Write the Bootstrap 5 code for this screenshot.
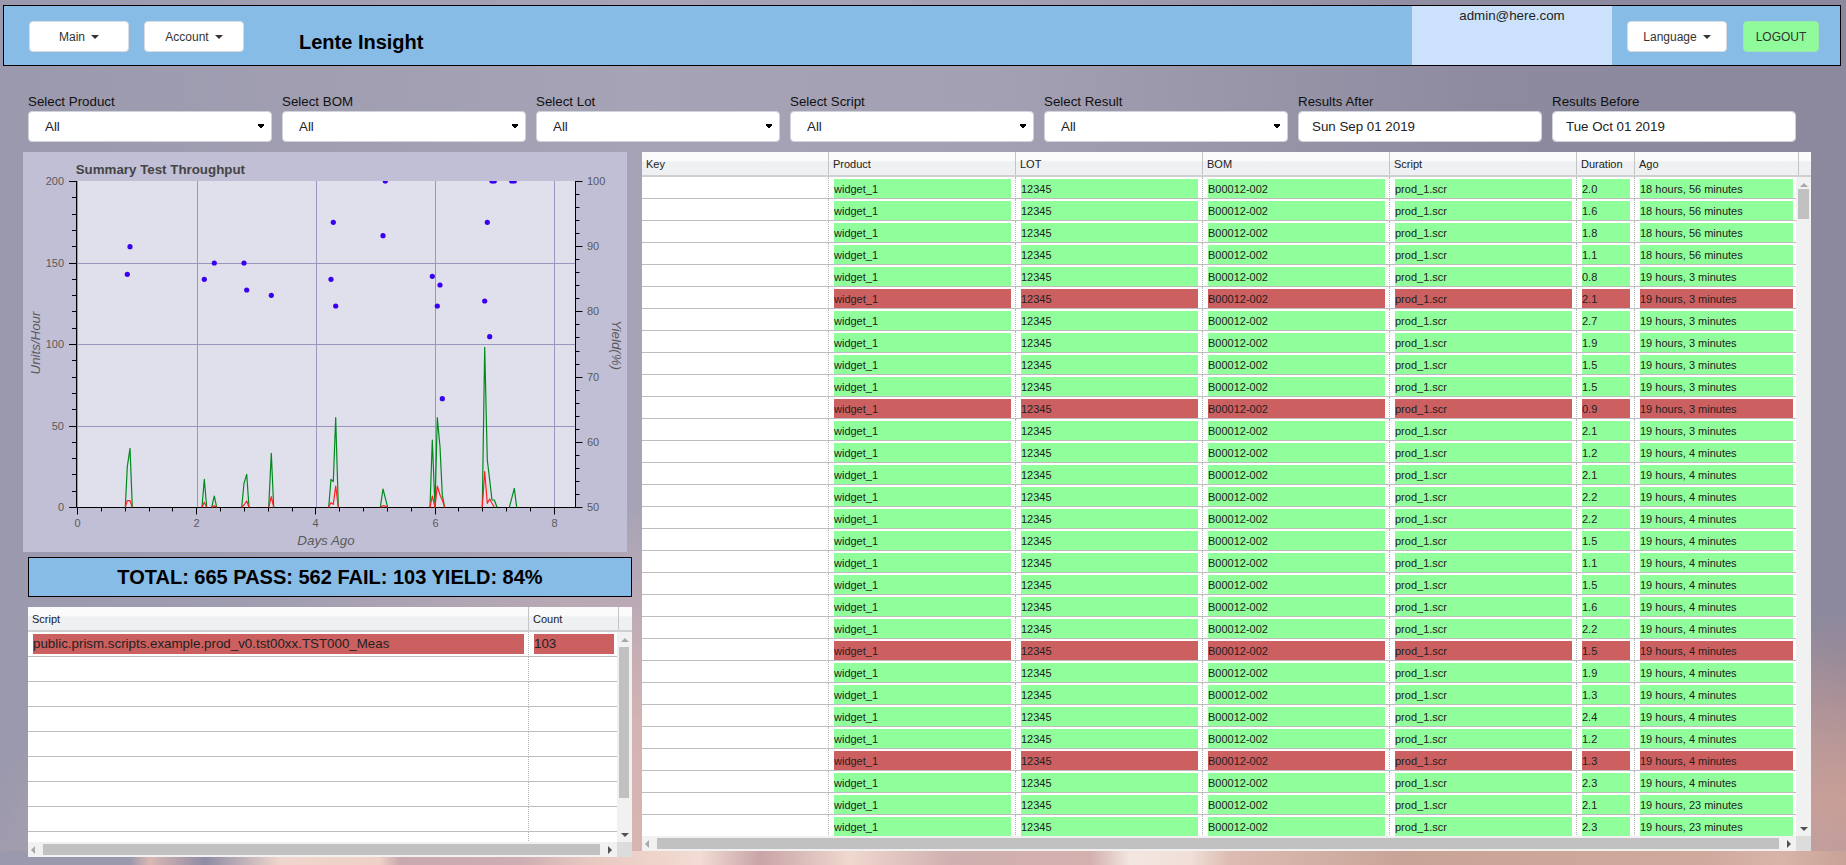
<!DOCTYPE html>
<html lang="en">
<head>
    <meta charset="UTF-8">
    <title>Lente Insight</title>
    <link href="https://cdn.jsdelivr.net/npm/bootstrap@5.3.3/dist/css/bootstrap.min.css" rel="stylesheet">
    <style>
        html, body { height: 100%; }
        body {
            margin: 0;
            overflow: hidden;
            font-family: "Liberation Sans", Arial, sans-serif;
            color: #222;
            background-color: #9b99ad;
            background-image:
                linear-gradient(90deg, #9b99ad 0, #9b99ad 130px, #d8b8b2 150px, #8f8ba5 205px, #efd6cc 280px, #eed0c6 380px, #c8a9ae 400px, #cdaeb2 520px, #e8c9c0 590px, #f2dcd3 700px, #c9a4a8 760px, #efd8ce 850px, #d0b0b0 950px, #d2b0ae 1090px, #f3e6e1 1130px, #f1dfd8 1190px, #dcbcb2 1230px, #c8a497 1400px, #cfa99c 1700px, #d8b4a8 1780px, #c8a296 1846px),
                radial-gradient(ellipse 1050px 420px at 1000px 900px, rgba(228,186,176,.95) 0, rgba(226,184,178,.75) 55%, rgba(200,165,175,0) 100%),
                radial-gradient(ellipse 260px 190px at 1846px 800px, rgba(196,150,138,.9) 0, rgba(178,140,140,.5) 60%, rgba(160,135,150,0) 100%),
                linear-gradient(90deg, #9b99ad 0, #a6a3b6 640px, #a3a0b3 1000px, #8d8a9f 1500px, #8c899e 1846px);
            background-size: 100% 14px, 100% 100%, 100% 100%, 100% 100%;
            background-position: 0 100%, 0 0, 0 0, 0 0;
            background-repeat: no-repeat;
        }

        .top-bar {
            height: 61px;
            margin: 5px 5px 0 3px;
            padding-left: 25px;
            padding-right: 21px;
            background: #87bce6;
            border: 1px solid #000;
        }
        .top-btn {
            height: 31px;
            margin-top: 15px;
            padding: 0;
            font-size: 12px;
            color: #333;
            background: #fff;
            border: 1px solid #d8dde3;
            border-radius: 4px;
        }
        .top-btn.dropdown-toggle::after {
            margin-left: 6px;
            vertical-align: 2px;
            border-top: 4px solid #333;
            border-right: 4px solid transparent;
            border-left: 4px solid transparent;
            border-bottom: 0;
        }
        .top-btn.wide-btn { width: 100px; }
        .top-btn.logout-btn { width: 76px; margin-left: 16px; background: #8ffb9b; border-color: #9be8ad; }
        .top-btn + .top-btn { margin-left: 15px; }
        .top-btn.wide-btn + .logout-btn { margin-left: 16px; }
        .app-title {
            margin: 24px 0 0 55px;
            font-size: 20px;
            line-height: 24px;
            font-weight: 700;
            color: #000;
        }
        .user-box {
            width: 200px;
            margin-right: 15px;
            padding-top: 1px;
            font-size: 13.33px;
            line-height: 18px;
            text-align: center;
            background: #cce2fc;
        }

        .filter-row { margin: 28px 0 0 28px; gap: 10px; }
        .filter-item { width: 244px; }
        .filter-item label {
            display: block;
            margin-bottom: 1px;
            font-size: 13.33px;
            line-height: 16px;
            color: #111;
        }
        .filter-item .form-select,
        .filter-item .form-control {
            height: 31px;
            min-height: 31px;
            font-size: 13.33px;
            line-height: 18px;
            color: #222;
            border: 1px solid #cfd3da;
            border-radius: 4px;
        }
        .filter-item .form-select {
            padding: 0 20px 0 16px;
            background-image: linear-gradient(45deg, transparent 50%, #000 50%), linear-gradient(-45deg, transparent 50%, #000 50%);
            background-size: 3px 6px, 3px 6px;
            background-position: right 10px center, right 7px center;
            background-repeat: no-repeat;
        }
        .filter-item .form-control { padding: 0 13px; }

        .main-row { margin: 10px 0 0 23px; }
        .left-col { width: 609px; }
        .right-col { width: 1169px; margin-left: 10px; }
        .chart-panel { width: 604px; height: 400px; background: #c1bfd6; }
        .chart-panel svg { display: block; font-family: "Liberation Sans", Arial, sans-serif; }
        .totals-box {
            width: 604px;
            height: 40px;
            margin: 5px 0 0 5px;
            font-size: 20px;
            font-weight: 700;
            line-height: 38px;
            text-align: center;
            color: #000;
            background: #87bce6;
            border: 1px solid #000;
        }

        .data-grid { background: #f1f1f1; font-size: 11px; color: #222; }
        .data-grid table { table-layout: fixed; border-collapse: separate; border-spacing: 0; }
        .grid-head { background: linear-gradient(#fbfbfb 0, #fbfbfb 40%, #eef0f1 42%, #eef0f1 100%); border-bottom: 2px solid #cfcfcf; }
        .grid-head th { padding: 2px 0 0 4px; font-weight: 400; color: #222; border-left: 1px solid #c4c4c4; }
        .grid-head th:first-child { border-left: 0; }
        .grid-rows { overflow: hidden; background: #fff; }
        .grid-rows td { padding: 0; border-left: 1px dotted #b5b5b5; border-bottom: 1px solid #bdbdbd; vertical-align: top; }
        .grid-rows td:first-child { border-left: 0; }
        .grid-rows tr:nth-child(even) td { background: #fafafa; }
        .cell-ok, .cell-bad { margin: 2px 4px 0 5px; padding-left: 0; white-space: nowrap; overflow: hidden; }
        .grid-rows td:last-child .cell-ok, .grid-rows td:last-child .cell-bad { margin-right: 3px; }
        .cell-ok { background: #90fe9b; }
        .cell-bad { background: #cc5f5f; }

        #product-grid { height: 699px; }
        #product-grid .grid-head { height: 25px; }
        #product-grid .grid-head th { height: 23px; }
        #product-grid .grid-body { height: 659px; }
        #product-grid .grid-rows { width: 1154px; }
        #product-grid .grid-rows td { height: 22px; }
        #product-grid .cell-ok, #product-grid .cell-bad { height: 19px; line-height: 20px; }
        #product-grid .v-bar { width: 15px; }
        #product-grid .v-thumb { height: 30px; margin: 2px 2px 0; }
        #product-grid .h-thumb { width: 1122px; }

        #script-grid { height: 250px; margin: 10px 0 0 5px; width: 604px; }
        #script-grid .grid-head { height: 25px; }
        #script-grid .grid-head th { height: 23px; }
        #script-grid .grid-body { height: 210px; }
        #script-grid .grid-rows { width: 589px; }
        #script-grid .grid-rows td { height: 25px; font-size: 13.33px; }
        #script-grid .cell-bad { height: 20px; line-height: 20px; }
        #script-grid .v-bar { width: 15px; }
        #script-grid .v-thumb { height: 151px; margin: 5px 3px 0 2px; }
        #script-grid .h-thumb { width: 557px; }

        .v-bar { background: #f1f1f1; }
        .v-thumb { background: #c1c1c1; }
        .arrow-up, .arrow-down { width: 0; height: 0; margin: 0 auto; border-left: 4px solid transparent; border-right: 4px solid transparent; }
        .arrow-up { margin-top: 6px; border-bottom: 4px solid #a9a9a9; }
        .arrow-down { margin-bottom: 5px; border-top: 4px solid #505050; }
        .h-bar { height: 15px; background: #f1f1f1; }
        .h-thumb { height: 11px; margin-left: 8px; background: #c1c1c1; }
        .arrow-left, .arrow-right { width: 0; height: 0; border-top: 4px solid transparent; border-bottom: 4px solid transparent; }
        .arrow-left { margin-left: 3px; border-right: 4px solid #a9a9a9; }
        .arrow-right { margin-left: 8px; border-left: 4px solid #505050; }
        .bar-corner { width: 15px; background: #dcdcdc; }
    </style>
</head>
<body>
    <div class="top-bar d-flex align-items-start">
        <button type="button" class="btn top-btn wide-btn dropdown-toggle">Main</button>
        <button type="button" class="btn top-btn wide-btn dropdown-toggle">Account</button>
        <div class="app-title">Lente Insight</div>
        <div class="user-box ms-auto align-self-stretch">admin@here.com</div>
        <button type="button" class="btn top-btn wide-btn dropdown-toggle">Language</button>
        <button type="button" class="btn top-btn logout-btn">LOGOUT</button>
    </div>

    <div class="filter-row d-flex">
        <div class="filter-item"><label>Select Product</label><select class="form-select"><option>All</option></select></div>
        <div class="filter-item"><label>Select BOM</label><select class="form-select"><option>All</option></select></div>
        <div class="filter-item"><label>Select Lot</label><select class="form-select"><option>All</option></select></div>
        <div class="filter-item"><label>Select Script</label><select class="form-select"><option>All</option></select></div>
        <div class="filter-item"><label>Select Result</label><select class="form-select"><option>All</option></select></div>
        <div class="filter-item"><label>Results After</label><input class="form-control" value="Sun Sep 01 2019"></div>
        <div class="filter-item"><label>Results Before</label><input class="form-control" value="Tue Oct 01 2019"></div>
    </div>

    <div class="main-row d-flex align-items-start">
        <div class="left-col">
            <div class="chart-panel">
                <svg id="chart" width="604" height="400" viewBox="23 152 604 400"></svg>
            </div>
            <div class="totals-box">TOTAL: 665 PASS: 562 FAIL: 103 YIELD: 84%</div>
            <div class="data-grid" id="script-grid">
                <div class="grid-head">
                    <table><colgroup><col style="width:500px"><col style="width:90px"><col style="width:14px"></colgroup>
                        <tr><th>Script</th><th>Count</th><th></th></tr></table>
                </div>
                <div class="grid-body d-flex">
                    <div class="grid-rows"><table id="script-rows"><colgroup><col style="width:500px"><col style="width:89px"></colgroup></table></div>
                    <div class="v-bar d-flex flex-column">
                        <div class="arrow-up"></div>
                        <div class="v-thumb"></div>
                        <div class="arrow-down mt-auto"></div>
                    </div>
                </div>
                <div class="d-flex">
                    <div class="h-bar d-flex align-items-center flex-grow-1">
                        <div class="arrow-left"></div>
                        <div class="h-thumb"></div>
                        <div class="arrow-right"></div>
                    </div>
                    <div class="bar-corner"></div>
                </div>
            </div>
        </div>

        <div class="right-col">
            <div class="data-grid" id="product-grid">
                <div class="grid-head">
                    <table><colgroup><col style="width:186px"><col style="width:187px"><col style="width:187px"><col style="width:187px"><col style="width:187px"><col style="width:58px"><col style="width:164px"><col style="width:13px"></colgroup>
                        <tr><th>Key</th><th>Product</th><th>LOT</th><th>BOM</th><th>Script</th><th>Duration</th><th>Ago</th><th></th></tr></table>
                </div>
                <div class="grid-body d-flex">
                    <div class="grid-rows"><table id="product-rows"><colgroup><col style="width:186px"><col style="width:187px"><col style="width:187px"><col style="width:187px"><col style="width:187px"><col style="width:58px"><col style="width:162px"></colgroup></table></div>
                    <div class="v-bar d-flex flex-column">
                        <div class="arrow-up"></div>
                        <div class="v-thumb"></div>
                        <div class="arrow-down mt-auto"></div>
                    </div>
                </div>
                <div class="d-flex">
                    <div class="h-bar d-flex align-items-center flex-grow-1">
                        <div class="arrow-left"></div>
                        <div class="h-thumb"></div>
                        <div class="arrow-right"></div>
                    </div>
                    <div class="bar-corner"></div>
                </div>
            </div>
        </div>
    </div>

    <script src="https://cdn.jsdelivr.net/npm/bootstrap@5.3.3/dist/js/bootstrap.bundle.min.js"></script>
    <script>
        // results table, F marks a failed run
        const A = '18 hours, 56 minutes', B = '19 hours, 3 minutes', C = '19 hours, 4 minutes', D = '19 hours, 23 minutes';
        const results = [
            ['2.0',A],['1.6',A],['1.8',A],['1.1',A],['0.8',B],['2.1',B,'F'],['2.7',B],['1.9',B],['1.5',B],['1.5',B],
            ['0.9',B,'F'],['2.1',B],['1.2',C],['2.1',C],['2.2',C],['2.2',C],['1.5',C],['1.1',C],['1.5',C],['1.6',C],
            ['2.2',C],['1.5',C,'F'],['1.9',C],['1.3',C],['2.4',C],['1.2',C],['1.3',C,'F'],['2.3',C],['2.1',D],['2.3',D]
        ];
        const productRows = document.getElementById('product-rows');
        results.forEach(r => {
            const cls = r[2] ? 'cell-bad' : 'cell-ok';
            const vals = ['widget_1', '12345', 'B00012-002', 'prod_1.scr', r[0], r[1]];
            productRows.insertAdjacentHTML('beforeend', '<tr><td></td>' + vals.map(v => `<td><div class="${cls}">${v}</div></td>`).join('') + '</tr>');
        });

        const scriptRows = document.getElementById('script-rows');
        scriptRows.insertAdjacentHTML('beforeend', '<tr><td><div class="cell-bad">public.prism.scripts.example.prod_v0.tst00xx.TST000_Meas</div></td><td><div class="cell-bad">103</div></td></tr>');
        for (let i = 0; i < 8; i++) scriptRows.insertAdjacentHTML('beforeend', '<tr><td></td><td></td></tr>');

        // chart, coordinates are page pixels
        const X0 = 77.5, XD = 59.6, YT = 181, YB = 507.5;
        const L = 76.5, R = 575.5;
        const snap = v => Math.round(v - 0.5) + 0.5;
        let s = `<defs><clipPath id="plot-clip"><rect x="${L}" y="${YT}" width="${R - L}" height="${YB - YT}"/></clipPath></defs>`;
        s += `<rect x="${L}" y="${YT}" width="${R - L}" height="${YB - YT}" fill="#e0dfec"/>`;
        s += `<text x="75.7" y="174" font-size="13.33" font-weight="700" fill="#444">Summary Test Throughput</text>`;

        const grid = '#9a95bd', axis = '#000', label = '#5a5a5a';
        const line = (x1, y1, x2, y2, c) => `<line x1="${x1}" y1="${y1}" x2="${x2}" y2="${y2}" stroke="${c}" stroke-width="1"/>`;
        [77.5, 197.5, 316.5, 435.5, 554.5].forEach(x => { s += line(x, YT, x, YB, grid); });
        [263.5, 344.5, 426.5].forEach(y => { s += line(L, y, R, y, grid); });
        // axes and ticks
        s += line(L, YT, L, YB, axis) + line(L, YB, R, YB, axis) + line(R, YT, R, YB, axis);
        for (let v = 0; v <= 200; v += 10) {
            const y = snap(YB - v / 200 * (YB - YT - 0.5)), major = v % 50 === 0;
            s += line(major ? 69 : 72, y, L, y, axis);
            if (major) s += `<text x="64" y="${y + 3.5}" font-size="11" text-anchor="end" fill="${label}">${v}</text>`;
        }
        for (let v = 50; v <= 100; v += 2) {
            const y = snap(YB - (v - 50) / 50 * (YB - YT - 0.5)), major = v % 10 === 0;
            s += line(R, y, R + (major ? 7 : 4), y, axis);
            if (major) s += `<text x="587" y="${y + 3.5}" font-size="11" fill="${label}">${v}</text>`;
        }
        for (let i = 0; i <= 20; i++) {
            const x = snap(X0 + i * 0.4 * XD), major = i % 5 === 0;
            s += line(x, YB, x, YB + (major ? 7 : 4), axis);
            if (major) s += `<text x="${x}" y="527" font-size="11" text-anchor="middle" fill="${label}">${i * 0.4}</text>`;
        }
        s += `<text x="326" y="545" font-size="13.33" font-style="italic" text-anchor="middle" fill="${label}">Days Ago</text>`;
        s += `<text transform="translate(40 343) rotate(-90)" font-size="13.33" font-style="italic" text-anchor="middle" fill="${label}">Units/Hour</text>`;
        s += `<text transform="translate(612 345) rotate(90)" font-size="13.33" font-style="italic" text-anchor="middle" fill="${label}">Yield(%)</text>`;

        const zl = (p) => [20 + p[0] / 3, 150 + p[1] / 3];
        const zr = (p) => [320 + p[0] / 3, 150 + p[1] / 3];
        const poly = (pts, c, w) => `<polyline fill="none" stroke="${c}" stroke-width="${w}" stroke-linejoin="round" points="${pts.map(p => p.map(n => n.toFixed(1)).join(',')).join(' ')}"/>`;
        const green = [
            [zl, [[316,1072],[322,950],[330,895],[337,1072]]],
            [zl, [[546,1072],[553,988],[560,1072]]],
            [zl, [[575,1072],[583,1038],[590,1072]]],
            [zl, [[665,1072],[672,1000],[680,973],[687,1072]]],
            [zl, [[746,1072],[754,910],[761,1072]]],
            [zr, [[26,1072],[33,988],[40,995],[47,803],[55,1072]]],
            [zr, [[181,1072],[189,1017],[203,1072]]],
            [zr, [[330,1072],[337,870],[345,1072],[352,803],[360,890],[367,1035],[374,1072]]],
            [zr, [[487,1072],[494,592],[502,930],[509,990],[516,1050],[523,1050],[531,1072]]],
            [zr, [[568,1072],[575,1045],[583,1015],[590,1072]]]
        ];
        const red = [
            [zl, [[316,1072],[322,1052],[330,1052],[337,1072]]],
            [zl, [[546,1072],[553,1057],[560,1072]]],
            [zl, [[575,1072],[583,1067],[590,1072]]],
            [zl, [[665,1072],[672,1065],[680,1053],[687,1072]]],
            [zl, [[746,1072],[754,1040],[761,1072]]],
            [zr, [[25,1072],[33,1058],[40,1063],[47,1008],[55,1072]]],
            [zr, [[181,1072],[189,1067],[196,1068],[203,1072]]],
            [zr, [[330,1072],[337,1038],[345,1072],[352,1008],[360,1035],[367,1050],[374,1072]]],
            [zr, [[487,1072],[494,965],[502,1060],[509,1047],[516,1060],[523,1072]]]
        ];
        green.forEach(g => { s += poly(g[1].map(g[0]), '#008a1e', 1.2); });
        red.forEach(g => { s += poly(g[1].map(g[0]), '#ff2020', 1.2); });

        const dots = [
            [330,290],[322,373],[553,388],[583,339],[672,339],[680,420],[754,436]
        ].map(zl).concat([
            [40,217],[33,388],[47,468],[196,93],[189,257],[337,379],[360,405],[352,468],[367,746],
            [502,217],[494,453],[509,560],[516,93],[523,93],[575,93],[583,93]
        ].map(zr));
        s += '<g clip-path="url(#plot-clip)">' + dots.map(p => `<circle cx="${p[0].toFixed(1)}" cy="${p[1].toFixed(1)}" r="2.6" fill="#3a00f0"/>`).join('') + '</g>';

        document.getElementById('chart').innerHTML = s;
    </script>
</body>
</html>
